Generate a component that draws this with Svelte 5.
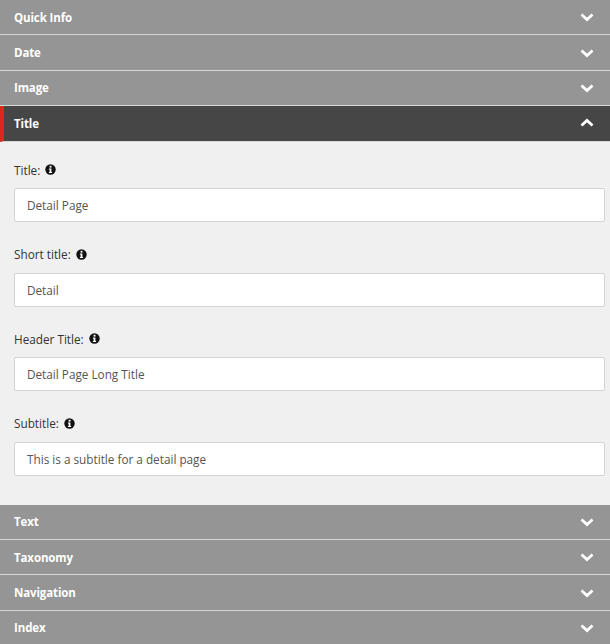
<script>
  const before = ["Quick Info", "Date", "Image"];
  const after = ["Text", "Taxonomy", "Navigation", "Index"];
  const fields = [
    { label: "Title:", value: "Detail Page" },
    { label: "Short title:", value: "Detail" },
    { label: "Header Title:", value: "Detail Page Long Title" },
    { label: "Subtitle:", value: "This is a subtitle for a detail page" }
  ];
</script>

{#snippet chevron(up)}
  <svg class="chevron" width="14" height="10" viewBox="0 0 14 10">
    <path d={up ? "M1.5 7.5 L7 2.5 L12.5 7.5" : "M1.5 2.5 L7 7.5 L12.5 2.5"} fill="none" stroke="#fff" stroke-width="2.8" />
  </svg>
{/snippet}

<div class="panels">
  {#each before as title}
    <div class="head"><span>{title}</span>{@render chevron(false)}</div>
  {/each}
  <div class="head open"><span>Title</span>{@render chevron(true)}</div>
  <div class="body">
    {#each fields as f}
      <div class="field">
        <div class="label">
          {f.label}
          <svg class="info" width="11" height="11" viewBox="0 0 11 11">
            <circle cx="5.5" cy="5.5" r="5.2" fill="#111" />
            <rect x="4.6" y="1.8" width="1.9" height="1.8" fill="#fff" />
            <path d="M3.9 4.5 H6.4 V8 H7.1 V9.1 H3.9 V8 H4.6 V5.6 H3.9 Z" fill="#fff" />
          </svg>
        </div>
        <input type="text" value={f.value} />
      </div>
    {/each}
  </div>
  {#each after as title}
    <div class="head"><span>{title}</span>{@render chevron(false)}</div>
  {/each}
</div>

<style>
  :global(body) {
    margin: 0;
    background: #f0f0f0;
  }
  .panels {
    width: 610px;
    height: 644px;
    overflow: hidden;
    font-family: "Open Sans", sans-serif;
    font-size: 11.75px;
  }
  .head {
    box-sizing: border-box;
    height: 35.4px;
    display: flex;
    align-items: center;
    justify-content: space-between;
    padding: 0 16px 0 14px;
    background: #959595;
    border-bottom: 1px solid #d6d6d6;
    color: #fff;
    font-size: 11.5px;
    letter-spacing: -0.12px;
    font-weight: 700;
  }
  .head.open {
    background: #464646;
    border-left: 4px solid #d9281e;
    padding-left: 10px;
  }
  .body {
    box-sizing: border-box;
    height: 363px;
    padding: 19.7px 5px 0 14px;
    background: #f0f0f0;
  }
  .field {
    margin-bottom: 23.7px;
  }
  .label {
    display: flex;
    align-items: center;
    gap: 5px;
    height: 17px;
    margin-bottom: 9.8px;
    color: #333;
  }
  input {
    display: block;
    box-sizing: border-box;
    width: 100%;
    height: 34px;
    padding: 0 12px;
    border: 1px solid #d4d4d4;
    border-radius: 2px;
    background: #fff;
    color: #555;
    font: 11.75px "Open Sans", sans-serif;
    outline: none;
  }
</style>
